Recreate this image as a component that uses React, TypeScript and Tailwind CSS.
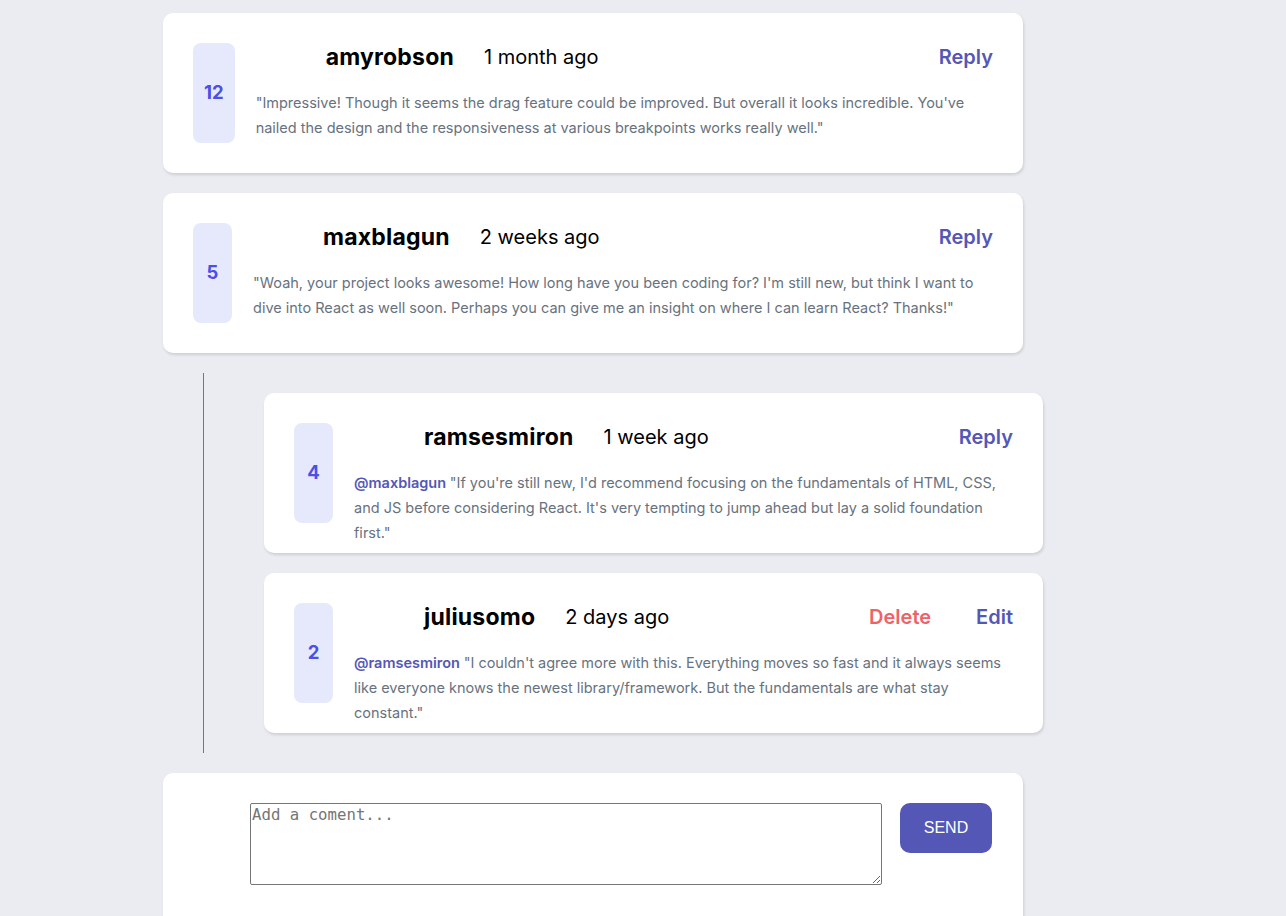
import React from "react";

type Comment = {
  id: number;
  score: number;
  user: string;
  when: string;
  text: string;
  replyingTo?: string;
  mine?: boolean;
};

const comments: Comment[] = [
  {
    id: 1,
    score: 12,
    user: "amyrobson",
    when: "1 month ago",
    text: "\"Impressive! Though it seems the drag feature could be improved. But overall it looks incredible. You've nailed the design and the responsiveness at various breakpoints works really well.\"",
  },
  {
    id: 2,
    score: 5,
    user: "maxblagun",
    when: "2 weeks ago",
    text: "\"Woah, your project looks awesome! How long have you been coding for? I'm still new, but think I want to dive into React as well soon. Perhaps you can give me an insight on where I can learn React? Thanks!\"",
  },
];

const replies: Comment[] = [
  {
    id: 3,
    score: 4,
    user: "ramsesmiron",
    when: "1 week ago",
    replyingTo: "maxblagun",
    text: "\"If you're still new, I'd recommend focusing on the fundamentals of HTML, CSS, and JS before considering React. It's very tempting to jump ahead but lay a solid foundation first.\"",
  },
  {
    id: 4,
    score: 2,
    user: "juliusomo",
    when: "2 days ago",
    replyingTo: "ramsesmiron",
    mine: true,
    text: "\"I couldn't agree more with this. Everything moves so fast and it always seems like everyone knows the newest library/framework. But the fundamentals are what stay constant.\"",
  },
];

const CommentCard = ({ c, wide }: { c: Comment; wide?: boolean }) => (
  <div
    className={`flex h-[160px] gap-[21px] rounded-[10px] bg-white p-[30px] shadow-[1px_2px_3px_rgba(0,0,0,0.12)] ${wide ? "w-[860px]" : "w-[779px]"}`}
  >
    {/* score */}
    <div className="flex h-[100px] min-w-[39px] shrink-0 items-center justify-center rounded-[8px] bg-[#e6e9fb] px-[11px] text-[18.5px] font-bold text-[#4b4fe6]">
      {c.score}
    </div>

    <div className="flex min-w-0 flex-1 flex-col">
      {/* header */}
      <div className="flex h-[28px] items-center">
        <div className="w-[70px] shrink-0" />
        <span className="text-[23px] font-bold tracking-[0.2px] text-black">{c.user}</span>
        <span className="ml-[30px] text-[20px] text-black">{c.when}</span>
        <div className="ml-auto flex items-center gap-[45px] text-[20px] font-semibold">
          {c.mine ? (
            <>
              <span className="text-[#ed6368]">Delete</span>
              <span className="text-[#5457b6]">Edit</span>
            </>
          ) : (
            <span className="text-[#5457b6]">Reply</span>
          )}
        </div>
      </div>

      {/* body */}
      <p className="mt-[19px] text-[14.5px] leading-[25px] text-[#67727e]">
        {c.replyingTo && (
          <span className="font-semibold text-[#5457b6]">@{c.replyingTo} </span>
        )}
        {c.text}
      </p>
    </div>
  </div>
);

export default function App() {
  return (
    <div
      className="h-screen overflow-hidden bg-[#eaecf1] pl-[163px] pt-[13px]"
      style={{ fontFamily: "Inter, 'Noto Sans', sans-serif" }}
    >
      <div className="flex flex-col gap-[20px]">
        {comments.map((c) => (
          <CommentCard key={c.id} c={c} wide />
        ))}

        {/* replies thread */}
        <div className="ml-[40px] flex flex-col gap-[20px] border-l border-[#777] py-[20px] pl-[60px]">
          {replies.map((c) => (
            <CommentCard key={c.id} c={c} />
          ))}
        </div>

        {/* new comment */}
        <div className="flex h-[160px] w-[860px] items-start gap-[18px] rounded-[10px] bg-white pl-[87px] pr-[31px] pt-[30px] shadow-[1px_2px_3px_rgba(0,0,0,0.12)]">
          <textarea
            placeholder="Add a coment..."
            className="h-[82px] w-[632px] rounded-[2px] border border-[#767676] px-[1px] py-[1px] text-[15.7px] leading-[19px] placeholder:text-[#757575]"
            style={{ fontFamily: "'DejaVu Sans Mono', monospace" }}
          />
          <button
            className="h-[50px] w-[92px] rounded-[10px] bg-[#5457b6] text-[16px] text-white"
            style={{ fontFamily: "'Liberation Sans', Arial, sans-serif" }}
          >
            SEND
          </button>
        </div>
      </div>
    </div>
  );
}
